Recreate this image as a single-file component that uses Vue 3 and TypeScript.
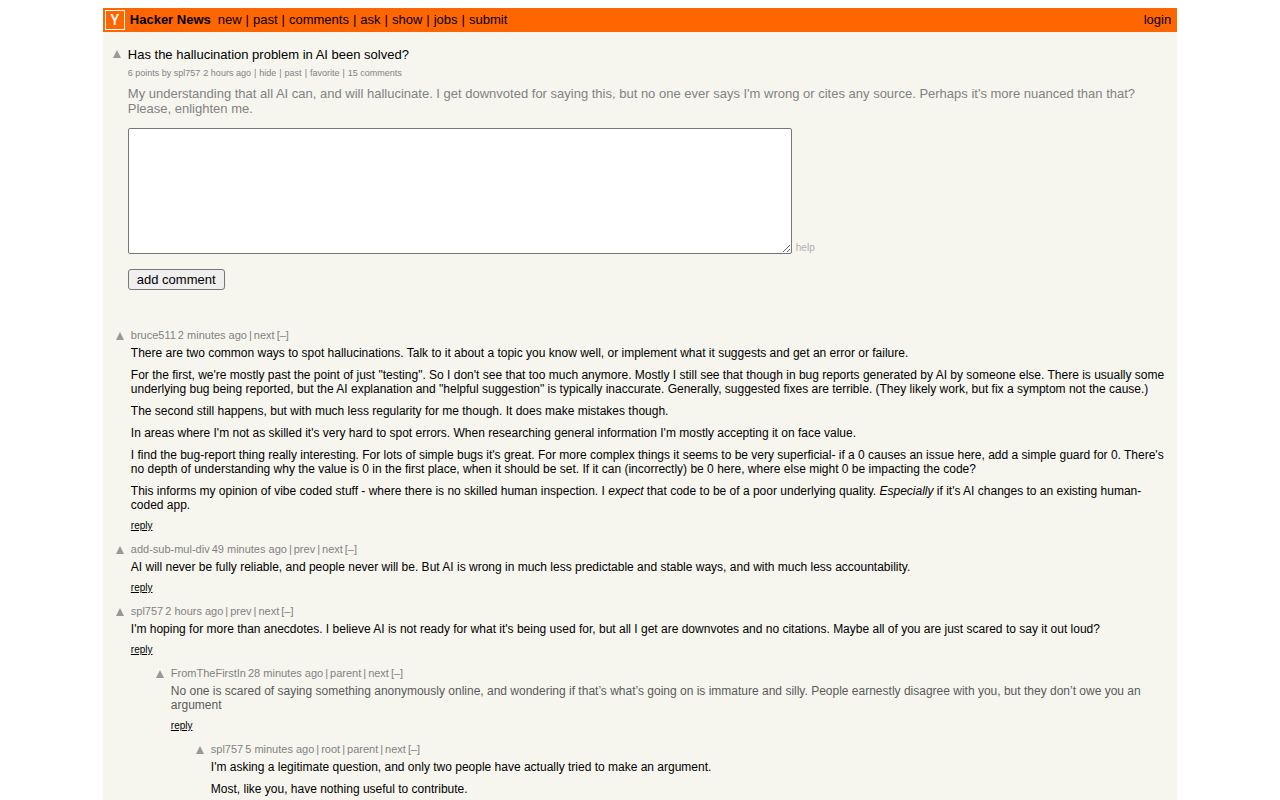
<script setup lang="ts">
interface TextRun {
  text: string
  em?: boolean
}

interface Comment {
  id: number
  author: string
  age: string
  depth: 0 | 1 | 2
  nav: string[]
  faded?: boolean
  canReply: boolean
  paragraphs: TextRun[][]
}

const navLinks: string[] = ['new', 'past', 'comments', 'ask', 'show', 'jobs', 'submit']
const storyLinks: string[] = ['hide', 'past', 'favorite', '15 comments']

const comments: Comment[] = [
  {
    id: 1,
    author: 'bruce511',
    age: '2 minutes ago',
    depth: 0,
    nav: ['next'],
    canReply: true,
    paragraphs: [
      [{ text: 'There are two common ways to spot hallucinations. Talk to it about a topic you know well, or implement what it suggests and get an error or failure.' }],
      [{ text: 'For the first, we\'re mostly past the point of just "testing". So I don\'t see that too much anymore. Mostly I still see that though in bug reports generated by AI by someone else. There is usually some underlying bug being reported, but the AI explanation and "helpful suggestion" is typically inaccurate. Generally, suggested fixes are terrible. (They likely work, but fix a symptom not the cause.)' }],
      [{ text: 'The second still happens, but with much less regularity for me though. It does make mistakes though.' }],
      [{ text: "In areas where I'm not as skilled it's very hard to spot errors. When researching general information I'm mostly accepting it on face value." }],
      [{ text: "I find the bug-report thing really interesting. For lots of simple bugs it's great. For more complex things it seems to be very superficial- if a 0 causes an issue here, add a simple guard for 0. There's no depth of understanding why the value is 0 in the first place, when it should be set. If it can (incorrectly) be 0 here, where else might 0 be impacting the code?" }],
      [
        { text: 'This informs my opinion of vibe coded stuff - where there is no skilled human inspection. I ' },
        { text: 'expect', em: true },
        { text: ' that code to be of a poor underlying quality. ' },
        { text: 'Especially', em: true },
        { text: " if it's AI changes to an existing human-coded app." },
      ],
    ],
  },
  {
    id: 2,
    author: 'add-sub-mul-div',
    age: '49 minutes ago',
    depth: 0,
    nav: ['prev', 'next'],
    canReply: true,
    paragraphs: [
      [{ text: 'AI will never be fully reliable, and people never will be. But AI is wrong in much less predictable and stable ways, and with much less accountability.' }],
    ],
  },
  {
    id: 3,
    author: 'spl757',
    age: '2 hours ago',
    depth: 0,
    nav: ['prev', 'next'],
    canReply: true,
    paragraphs: [
      [{ text: "I'm hoping for more than anecdotes. I believe AI is not ready for what it's being used for, but all I get are downvotes and no citations. Maybe all of you are just scared to say it out loud?" }],
    ],
  },
  {
    id: 4,
    author: 'FromTheFirstIn',
    age: '28 minutes ago',
    depth: 1,
    nav: ['parent', 'next'],
    faded: true,
    canReply: true,
    paragraphs: [
      [{ text: 'No one is scared of saying something anonymously online, and wondering if that’s what’s going on is immature and silly. People earnestly disagree with you, but they don’t owe you an argument' }],
    ],
  },
  {
    id: 5,
    author: 'spl757',
    age: '5 minutes ago',
    depth: 2,
    nav: ['root', 'parent', 'next'],
    canReply: false,
    paragraphs: [
      [{ text: "I'm asking a legitimate question, and only two people have actually tried to make an argument." }],
      [{ text: 'Most, like you, have nothing useful to contribute.' }],
    ],
  },
]
</script>

<template>
  <div class="page">
    <header class="topbar">
      <a class="logo" href="#" aria-label="Home">Y</a>
      <a class="brand" href="#">Hacker News</a>
      <nav class="links">
        <template v-for="(link, i) in navLinks" :key="link">
          <span v-if="i > 0">|</span>
          <a href="#">{{ link }}</a>
        </template>
      </nav>
      <a class="login" href="#">login</a>
    </header>

    <main>
      <article class="story">
        <button class="vote" type="button" aria-label="Upvote story">
          <svg viewBox="0 0 10 10" width="10" height="10"><path d="M5 1 L9 9 H1 Z" fill="#999" /></svg>
        </button>
        <div class="story-main">
          <h1 class="title"><a href="#">Has the hallucination problem in AI been solved?</a></h1>
          <div class="subtext">
            <span>6 points by <a href="#">spl757</a></span>
            <a href="#">2 hours ago</a>
            <template v-for="link in storyLinks" :key="link">
              <span>|</span>
              <a href="#">{{ link }}</a>
            </template>
          </div>
          <p class="story-text">
            My understanding that all AI can, and will hallucinate. I get downvoted for saying this, but no one ever says I'm wrong or cites any source. Perhaps it's more nuanced than that? Please, enlighten me.
          </p>
          <form class="reply-form" @submit.prevent>
            <div class="field">
              <textarea class="box" name="text" aria-label="Comment"></textarea>
              <a class="help" href="#">help</a>
            </div>
            <button class="submit" type="submit">add comment</button>
          </form>
        </div>
      </article>

      <section class="comments">
        <article v-for="c in comments" :key="c.id" class="comment" :class="`depth-${c.depth}`">
          <button class="vote" type="button" :aria-label="`Upvote comment by ${c.author}`">
            <svg viewBox="0 0 10 10" width="10" height="10"><path d="M5 1 L9 9 H1 Z" fill="#999" /></svg>
          </button>
          <div class="comment-main">
            <div class="head">
              <a href="#">{{ c.author }}</a>
              <a href="#">{{ c.age }}</a>
              <template v-for="link in c.nav" :key="link">
                <span>|</span>
                <a href="#">{{ link }}</a>
              </template>
              <button class="toggle" type="button" aria-label="Collapse thread">[–]</button>
            </div>
            <div class="body" :class="{ faded: c.faded }">
              <p v-for="(para, i) in c.paragraphs" :key="i">
                <template v-for="(run, j) in para" :key="j"><i v-if="run.em">{{ run.text }}</i><template v-else>{{ run.text }}</template></template>
              </p>
            </div>
            <a v-if="c.canReply" class="reply" href="#">reply</a>
          </div>
        </article>
      </section>
    </main>
  </div>
</template>

<style>
body {
  margin: 0;
  padding: 8px 8px 0;
  background: #fff;
}
</style>

<style scoped>
.page {
  box-sizing: border-box;
  width: 85%;
  min-height: calc(100vh - 8px);
  margin: 0 auto;
  background: #f6f6ef;
  color: #828282;
  font-family: "Liberation Sans", Arial, sans-serif;
  font-size: 13px;
  line-height: 15px;
}

a {
  color: inherit;
  text-decoration: none;
}

p,
h1 {
  margin: 0;
}

.topbar {
  display: flex;
  align-items: center;
  padding: 2px 6px 2px 2px;
  background: #ff6600;
  color: #000;
  line-height: 14px;
}

.logo {
  box-sizing: border-box;
  width: 20px;
  height: 20px;
  border: 1px solid #fff;
  color: #fff;
  font-family: Roboto, "Liberation Sans", sans-serif;
  font-size: 14px;
  font-weight: 500;
  line-height: 18px;
  text-align: center;
}

.brand {
  margin: 0 7px 0 5px;
  font-weight: bold;
}

.links {
  display: flex;
  gap: 4px;
}

.login {
  margin-left: auto;
}

.story,
.comment {
  display: flex;
  align-items: flex-start;
  gap: 6px;
}

.story {
  padding: 15px 10px 0 9px;
}

.story-main,
.comment-main {
  flex: 1;
  min-width: 0;
}

.vote {
  display: block;
  margin: 2px 0 0;
  padding: 0;
  border: 0;
  background: none;
  line-height: 0;
  cursor: pointer;
}

.comment .vote {
  margin-top: 3px;
}

.title {
  color: #000;
  font-size: 13px;
  font-weight: normal;
}

.subtext {
  display: flex;
  gap: 3px;
  margin-top: 5px;
  font-size: 9px;
  line-height: 12px;
}

.story-text {
  margin-top: 7px;
}

.reply-form {
  margin-top: 12px;
}

.field {
  display: flex;
  align-items: flex-end;
  gap: 4px;
}

.box {
  box-sizing: border-box;
  width: 664px;
  max-width: 90%;
  height: 126px;
  margin: 0;
  padding: 2px;
  border: 1px solid #767676;
  border-radius: 2px;
  background: #fff;
  font-family: "Liberation Mono", monospace;
  font-size: 13px;
  resize: both;
}

.help {
  color: #afafaf;
  font-size: 10px;
  line-height: 12px;
}

.submit {
  display: block;
  margin-top: 15px;
  padding: 2px 8px;
  border: 1px solid #767676;
  border-radius: 3px;
  background: #efefef;
  color: #000;
  font-family: inherit;
  font-size: 13px;
  line-height: 15px;
}

.comments {
  display: flex;
  flex-direction: column;
  gap: 10px;
  margin-top: 38px;
  padding: 0 10px 0 12px;
}

.depth-1 {
  padding-left: 40px;
}

.depth-2 {
  padding-left: 80px;
}

.head {
  display: flex;
  gap: 2px;
  font-size: 11px;
  line-height: 14px;
}

.toggle {
  padding: 0;
  border: 0;
  background: none;
  color: inherit;
  font: inherit;
  cursor: pointer;
}

.body {
  display: flex;
  flex-direction: column;
  gap: 8px;
  margin-top: 4px;
  color: #000;
  font-size: 12px;
  line-height: 14px;
}

.faded {
  color: #5a5a5a;
}

.reply {
  display: block;
  width: fit-content;
  margin-top: 8px;
  color: #000;
  font-size: 10px;
  line-height: 12px;
  text-decoration: underline;
}
</style>
